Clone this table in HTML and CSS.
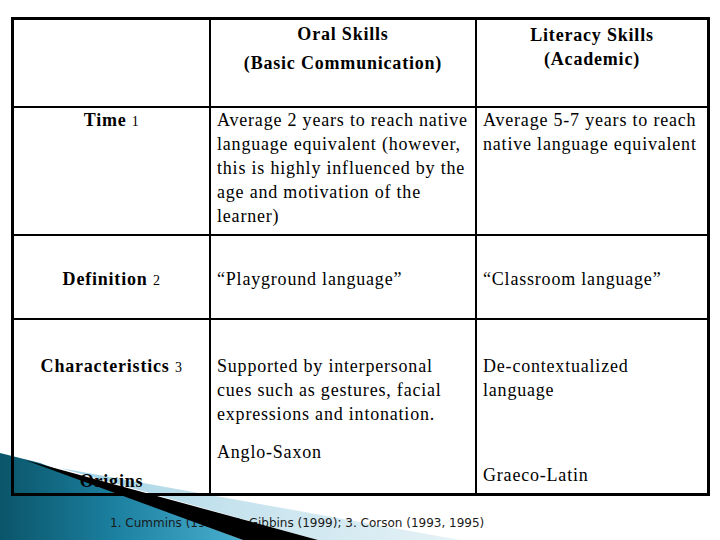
FILE: index.html
```html
<!DOCTYPE html>
<html>
<head>
<meta charset="utf-8">
<link rel="stylesheet" href="styles.css">
</head>
<body>
<div class="slide">
  <svg class="deco-back" width="720" height="540" viewBox="0 0 720 540">
    <defs>
      <linearGradient id="teal" gradientUnits="userSpaceOnUse" x1="0" y1="0" x2="250" y2="0">
        <stop offset="0" stop-color="#0a5569"/>
        <stop offset="0.45" stop-color="#1b7f9f"/>
        <stop offset="1" stop-color="#4db1d2"/>
      </linearGradient>
      <linearGradient id="pale" gradientUnits="userSpaceOnUse" x1="60" y1="0" x2="460" y2="0">
        <stop offset="0" stop-color="#9fd2e4"/>
        <stop offset="0.4" stop-color="#c4e2ed"/>
        <stop offset="1" stop-color="#e6f2f6"/>
      </linearGradient>
    </defs>
    <polygon points="60,468 460,540 318,540" fill="url(#pale)"/>
    <polygon points="0,453 40,463 243,540 0,540" fill="url(#teal)"/>
  </svg>

  <div class="grid">
    <div class="c c1 head"></div>
    <div class="c c2 head oral"><b>Oral Skills</b><br><b>(Basic Communication)</b></div>
    <div class="c c3 head lit"><b>Literacy Skills</b><br><b>(Academic)</b></div>

    <div class="c c1 top label"><b>Time</b> <span class="ref">1</span></div>
    <div class="c c2 top txt">Average 2 years to reach native<br>language equivalent (however,<br>this is highly influenced by the<br>age and motivation of the<br>learner)</div>
    <div class="c c3 top txt">Average 5-7 years to reach<br>native language equivalent</div>

    <div class="c c1 top mid label"><b>Definition</b> <span class="ref">2</span></div>
    <div class="c c2 top mid txt">“Playground language”</div>
    <div class="c c3 top mid txt">“Classroom language”</div>

    <div class="c c1 top chr label"><b>Characteristics</b> <span class="ref">3</span></div>
    <div class="c c2 top chr txt">Supported by interpersonal<br>cues such as gestures, facial<br>expressions and intonation.</div>
    <div class="c c3 top chr txt">De-contextualized<br>language</div>

    <div class="c c1 org label"><b>Origins</b></div>
    <div class="c c2 ang txt">Anglo-Saxon</div>
    <div class="c c3 grc txt">Graeco-Latin</div>
  </div>

  <p class="refs">1. Cummins (1984); 2. Gibbins (1999); 3. Corson (1993, 1995)</p>

  <svg class="deco-stripe" width="720" height="540" viewBox="0 0 720 540">
    <polygon points="25,460 318,540 243,540" fill="#000"/>
  </svg>
</div>
</body>
</html>
```

FILE: styles.css
```css
html, body {
  margin: 0;
  padding: 0;
  background: #fff;
}

.slide {
  position: relative;
  width: 720px;
  height: 540px;
  overflow: hidden;
  box-sizing: border-box;
  padding: 17px 0 0 11px;
  font-family: "Liberation Serif", "Times New Roman", serif;
  color: #000;
}

.deco-back {
  position: absolute;
  left: 0;
  top: 0;
  z-index: 0;
}

.deco-stripe {
  position: absolute;
  left: 0;
  top: 0;
  z-index: 3;
}

.grid {
  position: relative;
  z-index: 1;
  display: grid;
  grid-template-columns: 195px 266px 232px;
  grid-template-rows: 86px 128px 84px 112px 63px;
  width: 693px;
  border: 3px solid #000;
}

.c {
  box-sizing: border-box;
  font-size: 18px;
  line-height: 24px;
  letter-spacing: 0.8px;
}

.c2, .c3 {
  border-left: 2px solid #000;
}

.top {
  border-top: 2px solid #000;
}

.txt {
  padding-left: 6px;
}

.label {
  text-align: center;
}

.ref {
  font-size: 14px;
  letter-spacing: 0.5px;
}

.oral {
  text-align: center;
  line-height: 29px;
  padding-top: 0;
}

.lit {
  text-align: center;
  padding-top: 3px;
}

.mid {
  padding-top: 31px;
}

.chr {
  padding-top: 34px;
}

.ang {
  padding-top: 10px;
}

.grc {
  padding-top: 33px;
}

.org {
  padding-top: 39px;
}

.refs {
  position: relative;
  z-index: 2;
  margin: 20px 0 0 99px;
  font-family: "DejaVu Sans", Verdana, sans-serif;
  font-size: 12px;
  line-height: 14px;
  color: #1a1a1a;
}
```
